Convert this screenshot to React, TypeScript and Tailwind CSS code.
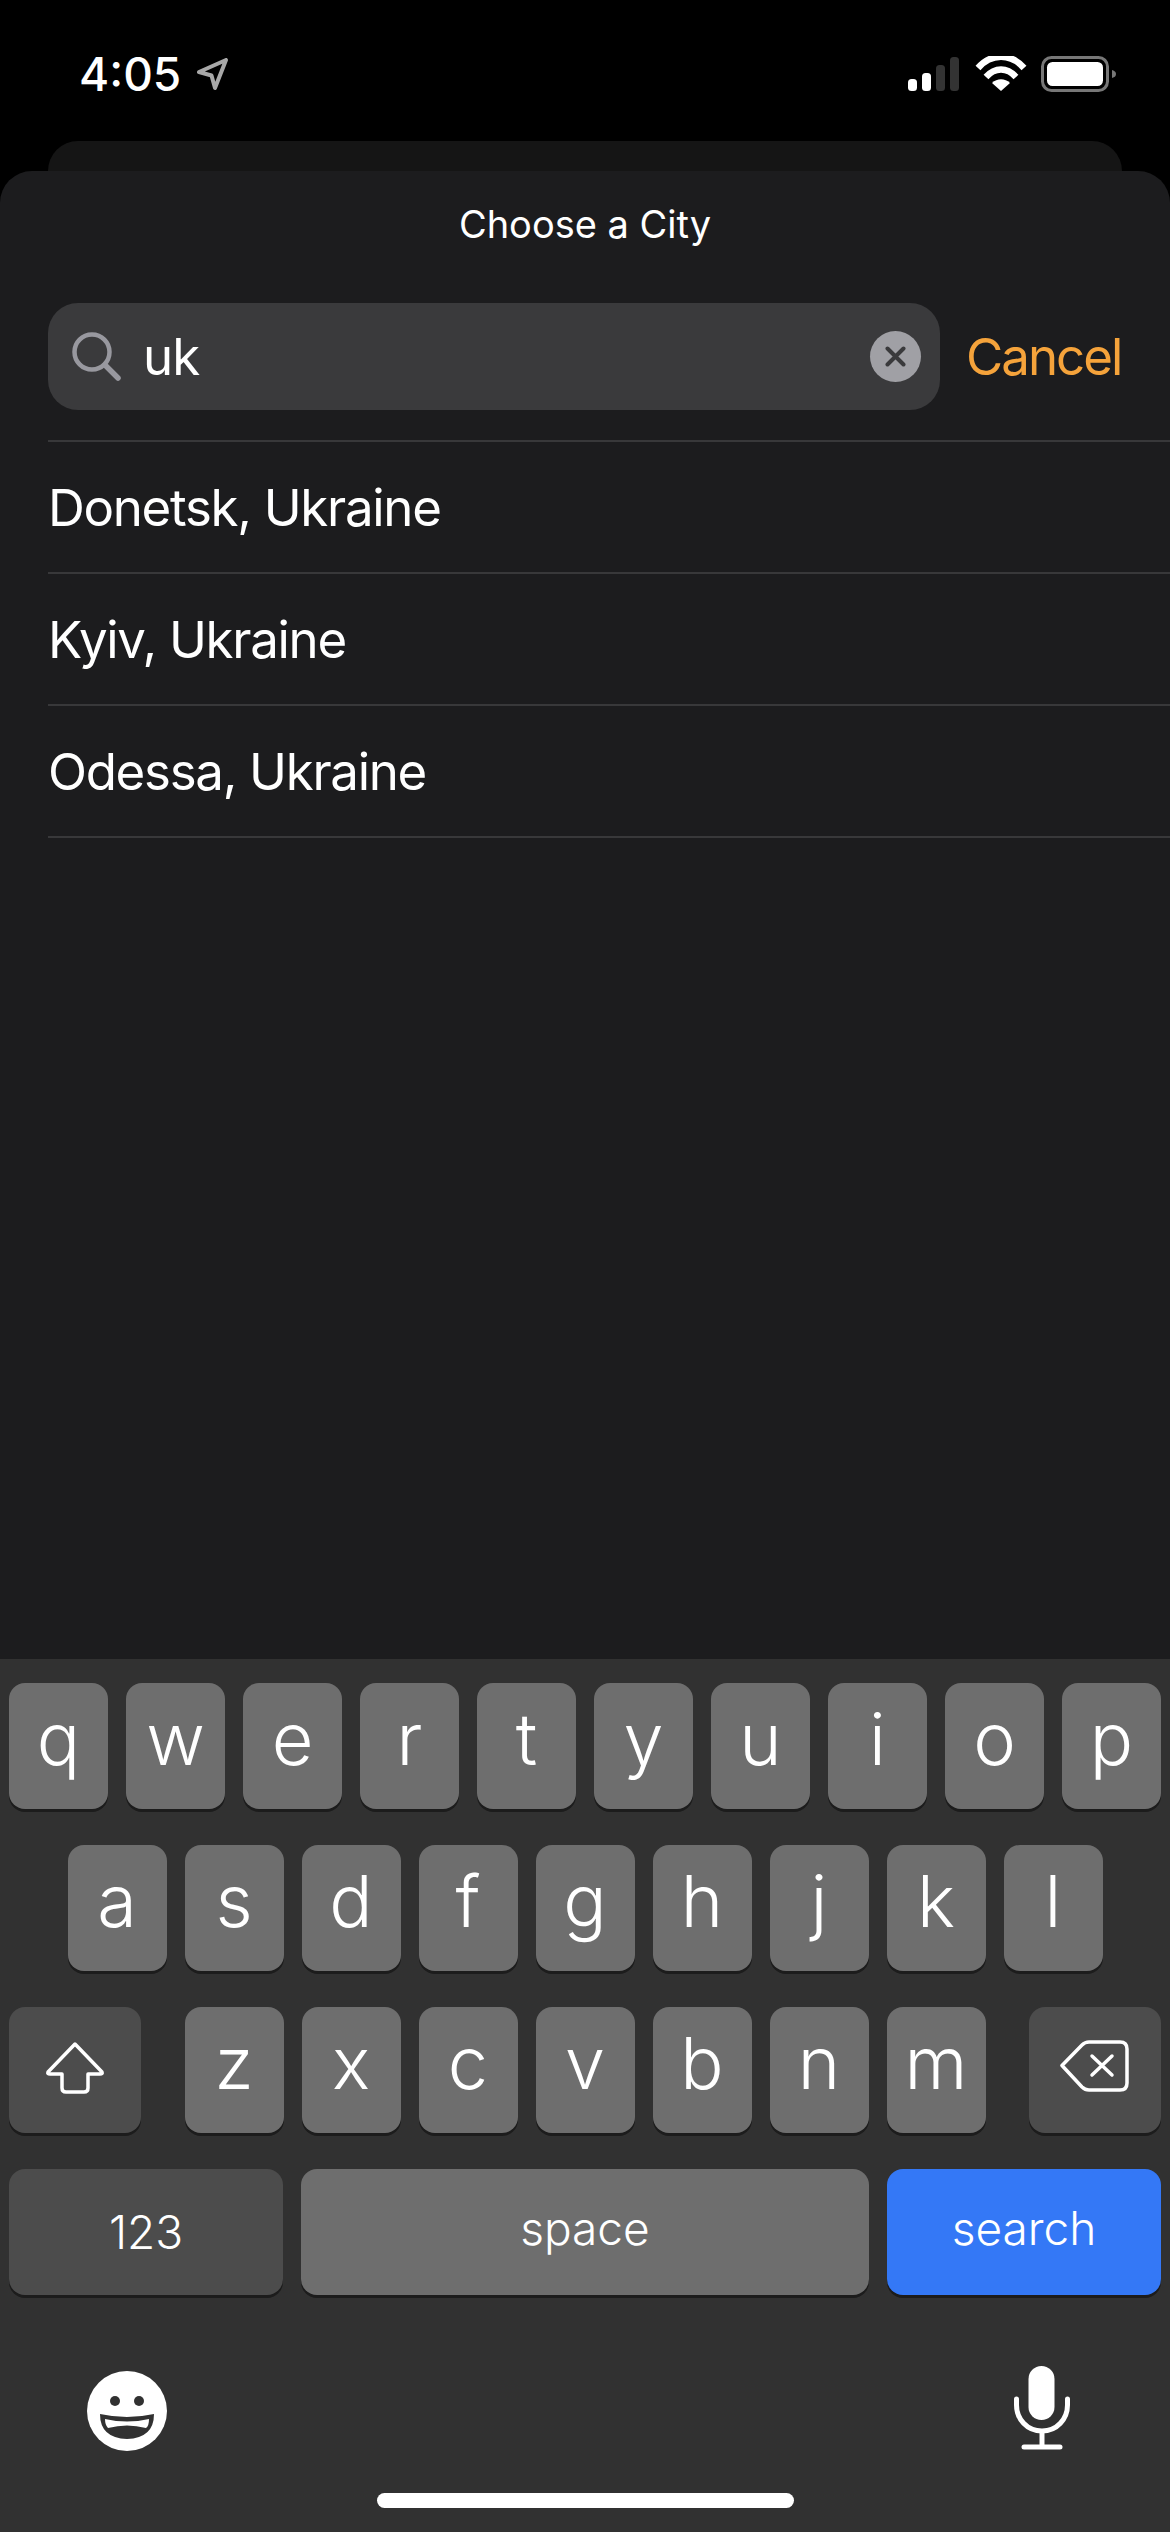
const FONT = "font-['Inter','Liberation_Sans',sans-serif]";

function StatusBar() {
  return (
    <div className="h-[141px] flex items-start justify-between pl-[79px] pr-[52px] pt-[48px] shrink-0">
      <div className="flex items-center gap-[18px]">
        <span className="text-[46px] leading-[52px] font-medium text-white w-[100px]">4:05</span>
        <svg width="32" height="32" viewBox="0 0 32 32" fill="none">
          <path d="M2 14 L29 2 L18 30 L14.5 17.5 Z" stroke="#a8a8a8" strokeWidth="4" strokeLinejoin="round" />
        </svg>
      </div>
      <div className="flex items-start pt-[8px]">
        <svg width="210" height="38" viewBox="0 0 210 38" fill="none">
          <rect x="0" y="23" width="9" height="12" rx="3.5" fill="#fff" />
          <rect x="14" y="17" width="9" height="18" rx="3.5" fill="#fff" />
          <rect x="28" y="9" width="9" height="26" rx="3.5" fill="#333" />
          <rect x="42" y="1" width="9" height="34" rx="3.5" fill="#333" />
          <path d="M70 12 C83 -3 103 -3 116 12" stroke="#fff" strokeWidth="6.5" />
          <path d="M78 21 C87 11 99 11 108 21" stroke="#fff" strokeWidth="6.5" />
          <path d="M84 27 C89 22 97 22 102 27 L93 35 Z" fill="#fff" />
          <rect x="134.5" y="1.5" width="65" height="33" rx="9" stroke="#777" strokeWidth="3" />
          <rect x="139" y="6" width="56" height="24" rx="5.5" fill="#fff" />
          <path d="M204 14 C207 15 208 16 208 18 C208 20 207 21 204 22 Z" fill="#777" />
        </svg>
      </div>
    </div>
  );
}

function SearchBar() {
  return (
    <div className="flex items-center pl-[48px] h-[107px]">
      <div className="w-[892px] h-[107px] rounded-[30px] bg-[#3a3a3c] flex items-center pl-[24px] pr-[19px]">
        <svg width="49" height="49" viewBox="0 0 49 49" fill="none" className="shrink-0">
          <circle cx="20" cy="20" r="17.5" stroke="#98989f" strokeWidth="4.5" />
          <path d="M33 33 L46 46" stroke="#98989f" strokeWidth="5.5" strokeLinecap="round" />
        </svg>
        <span className="ml-[22px] flex-1 text-[51px] leading-[60px] tracking-[-1px] text-white">uk</span>
        <div className="w-[51px] h-[51px] rounded-full bg-[#a0a0a5] flex items-center justify-center">
          <svg width="21" height="21" viewBox="0 0 21 21" fill="none">
            <path d="M2.5 2.5 L18.5 18.5 M18.5 2.5 L2.5 18.5" stroke="#3a3a3c" strokeWidth="4" strokeLinecap="round" />
          </svg>
        </div>
      </div>
      <span className="ml-[26px] text-[51px] leading-[60px] tracking-[-2px] text-[#f5a33b]">Cancel</span>
    </div>
  );
}

function Key({ label, className = "w-[99px]" }: { label: string; className?: string }) {
  return (
    <div className={`${className} h-[126px] rounded-[16px] bg-[#6e6e6e] shadow-[0_3px_0_#1c1c1c] flex items-center justify-center text-[72px] leading-[72px] font-light text-white pb-[15px]`}>
      {label}
    </div>
  );
}

function KeyRow({ keys }: { keys: string }) {
  return (
    <div className="flex justify-center gap-[18px]">
      {keys.split("").map((k) => (
        <Key key={k} label={k} />
      ))}
    </div>
  );
}

function Keyboard() {
  return (
    <div className="mt-auto h-[873px] bg-[#313131] shrink-0 pt-[24px] px-[9px] flex flex-col">
      <div className="flex flex-col gap-[36px]">
        <KeyRow keys="qwertyuiop" />
        <KeyRow keys="asdfghjkl" />
        <div className="flex justify-between">
          <div className="w-[132px] h-[126px] rounded-[16px] bg-[#4c4c4c] shadow-[0_3px_0_#1c1c1c] flex items-center justify-center pb-[4px]">
            <svg width="60" height="54" viewBox="0 0 60 54" fill="none">
              <path d="M30 3 L57 31 Q58 33 55 33 L43 33 L43 47 Q43 51 39 51 L21 51 Q17 51 17 47 L17 33 L5 33 Q2 33 3 31 Z" stroke="#fff" strokeWidth="3.5" strokeLinejoin="round" />
            </svg>
          </div>
          <div className="flex gap-[18px]">
            {"zxcvbnm".split("").map((k) => (
              <Key key={k} label={k} />
            ))}
          </div>
          <div className="w-[132px] h-[126px] rounded-[16px] bg-[#4c4c4c] shadow-[0_3px_0_#1c1c1c] flex items-center justify-center pb-[8px]">
            <svg width="70" height="52" viewBox="0 0 70 52" fill="none">
              <path d="M2 25.5 L22 5 Q25 2 29 2 L60 2 Q67 2 67 9 L67 43 Q67 50 60 50 L29 50 Q25 50 22 47 Z" stroke="#fff" strokeWidth="3.5" strokeLinejoin="round" />
              <path d="M32 16 L52 35 M52 16 L32 35" stroke="#fff" strokeWidth="3.5" strokeLinecap="round" />
            </svg>
          </div>
        </div>
        <div className="flex gap-[18px]">
          <div className="w-[274px] h-[126px] rounded-[16px] bg-[#4c4c4c] shadow-[0_3px_0_#1c1c1c] flex items-center justify-center text-[46px] font-[350] text-white">123</div>
          <div className="w-[568px] h-[126px] rounded-[16px] bg-[#6e6e6e] shadow-[0_3px_0_#1c1c1c] flex items-center justify-center text-[46px] font-[350] text-white pb-[8px]">space</div>
          <div className="w-[274px] h-[126px] rounded-[16px] bg-[#3478f6] shadow-[0_3px_0_#1c1c1c] flex items-center justify-center text-[46px] font-[350] text-white pb-[8px]">search</div>
        </div>
      </div>
      <div className="flex justify-between items-start pl-[78px] pr-[91px] pt-[76px]">
        <svg width="80" height="80" viewBox="0 0 80 80">
          <circle cx="40" cy="40" r="40" fill="#fff" />
          <circle cx="28" cy="30" r="5" fill="#313131" />
          <circle cx="52" cy="30" r="5" fill="#313131" />
          <path d="M13 43 Q40 49 67 43 Q67 67 40 68 Q13 67 13 43 Z" fill="#313131" />
          <path d="M18 48 Q40 53 62 48 Q62 55 59 57 Q40 52 21 57 Q18 54 18 48 Z" fill="#fff" />
        </svg>
        <svg width="56" height="84" viewBox="0 0 56 84" fill="none" className="-mt-[5px]">
          <rect x="14.5" y="0" width="26" height="54" rx="13" fill="#fff" />
          <path d="M2.5 33 L2.5 39 C2.5 53 13 65 28 65 C43 65 53.5 53 53.5 39 L53.5 33" stroke="#fff" strokeWidth="5" strokeLinecap="round" />
          <path d="M28 65 L28 80" stroke="#fff" strokeWidth="5" />
          <path d="M10 81 L46 81" stroke="#fff" strokeWidth="5" strokeLinecap="round" />
        </svg>
      </div>
      <div className="mt-auto mb-[24px] mx-auto w-[417px] h-[15px] rounded-full bg-white" />
    </div>
  );
}

export default function App() {
  const cities = ["Donetsk, Ukraine", "Kyiv, Ukraine", "Odessa, Ukraine"];
  return (
    <div className={`w-[1170px] h-[2532px] bg-black overflow-hidden flex flex-col ${FONT}`}>
      <StatusBar />
      <div className="mx-[48px] h-[30px] rounded-t-[30px] bg-[#151515] shrink-0" />
      <div className="flex-1 rounded-t-[32px] bg-[#1c1c1e] flex flex-col overflow-hidden">
        <div className="h-[132px] pt-[30px] text-center text-[38px] leading-[46px] text-white shrink-0">Choose a City</div>
        <SearchBar />
        <div className="ml-[48px] mt-[30px] border-t-2 border-[#38383a]">
          {cities.map((c) => (
            <div key={c} className="h-[132px] border-b-2 border-[#38383a] flex items-center pt-[2px] text-[51px] leading-[60px] tracking-[-1.3px] text-white">{c}</div>
          ))}
        </div>
        <Keyboard />
      </div>
    </div>
  );
}
